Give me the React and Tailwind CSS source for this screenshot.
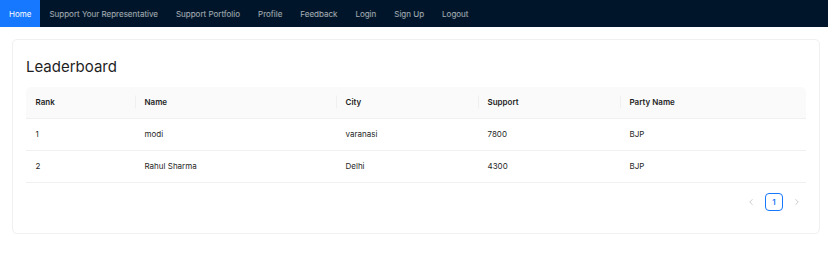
import { ChevronLeft, ChevronRight } from "lucide-react";

const links = [
  "Home",
  "Support Your Representative",
  "Support Portfolio",
  "Profile",
  "Feedback",
  "Login",
  "Sign Up",
  "Logout",
];

const columns = ["Rank", "Name", "City", "Support", "Party Name"];

const rows = [
  { rank: 1, name: "modi", city: "varanasi", support: 7800, party: "BJP" },
  { rank: 2, name: "Rahul Sharma", city: "Delhi", support: 4300, party: "BJP" },
];

export default function App() {
  return (
    <div className="min-h-[272px] w-full bg-white font-['Inter',sans-serif] text-[#1f1f1f]">
      <nav className="flex h-[27px] items-stretch bg-[#001529]">
        {links.map((l, i) => (
          <a
            key={l}
            className={
              "flex items-center px-[9px] text-[8px] " +
              (i === 0 ? "bg-[#1677ff] text-white" : "text-white/65")
            }
          >
            {l}
          </a>
        ))}
      </nav>

      <div className="mt-[12px] mr-[8px] ml-[12px] rounded-[5px] border border-[#f0f0f0] px-[13px] pt-[17px] pb-[22px]">
        <h2 className="text-[15px] leading-[20px] font-normal text-[#1f1f1f]">
          Leaderboard
        </h2>

        <table className="mt-[10px] w-full table-fixed border-collapse text-[8px]">
          <colgroup>
            <col className="w-[109px]" />
            <col className="w-[201px]" />
            <col className="w-[142px]" />
            <col className="w-[142px]" />
            <col />
          </colgroup>
          <thead>
            <tr className="h-[31px] bg-[#fafafa]">
              {columns.map((c, i) => (
                <th
                  key={c}
                  className={
                    "relative border-b border-[#f0f0f0] px-[9.5px] text-left font-semibold " +
                    (i === 0 ? "rounded-tl-[5px] " : "") +
                    (i === columns.length - 1 ? "rounded-tr-[5px]" : "")
                  }
                >
                  {i > 0 && (
                    <span className="absolute top-1/2 left-0 h-[13px] w-px -translate-y-1/2 bg-[#f0f0f0]" />
                  )}
                  {c}
                </th>
              ))}
            </tr>
          </thead>
          <tbody>
            {rows.map((r) => (
              <tr key={r.rank} className="h-[32px] border-b border-[#f0f0f0]">
                <td className="px-[9.5px]">{r.rank}</td>
                <td className="px-[9.5px]">{r.name}</td>
                <td className="px-[9.5px]">{r.city}</td>
                <td className="px-[9.5px]">{r.support}</td>
                <td className="px-[9.5px]">{r.party}</td>
              </tr>
            ))}
          </tbody>
        </table>

        <div className="mt-[10px] flex justify-end gap-[5px]">
          <span className="flex h-[18px] w-[18px] items-center justify-center text-black/25">
            <ChevronLeft size={10} strokeWidth={2} />
          </span>
          <span className="flex h-[18px] w-[18px] items-center justify-center rounded-[4px] border border-[#1677ff] text-[8px] font-semibold text-[#1677ff]">
            1
          </span>
          <span className="flex h-[18px] w-[18px] items-center justify-center text-black/25">
            <ChevronRight size={10} strokeWidth={2} />
          </span>
        </div>
      </div>
    </div>
  );
}
